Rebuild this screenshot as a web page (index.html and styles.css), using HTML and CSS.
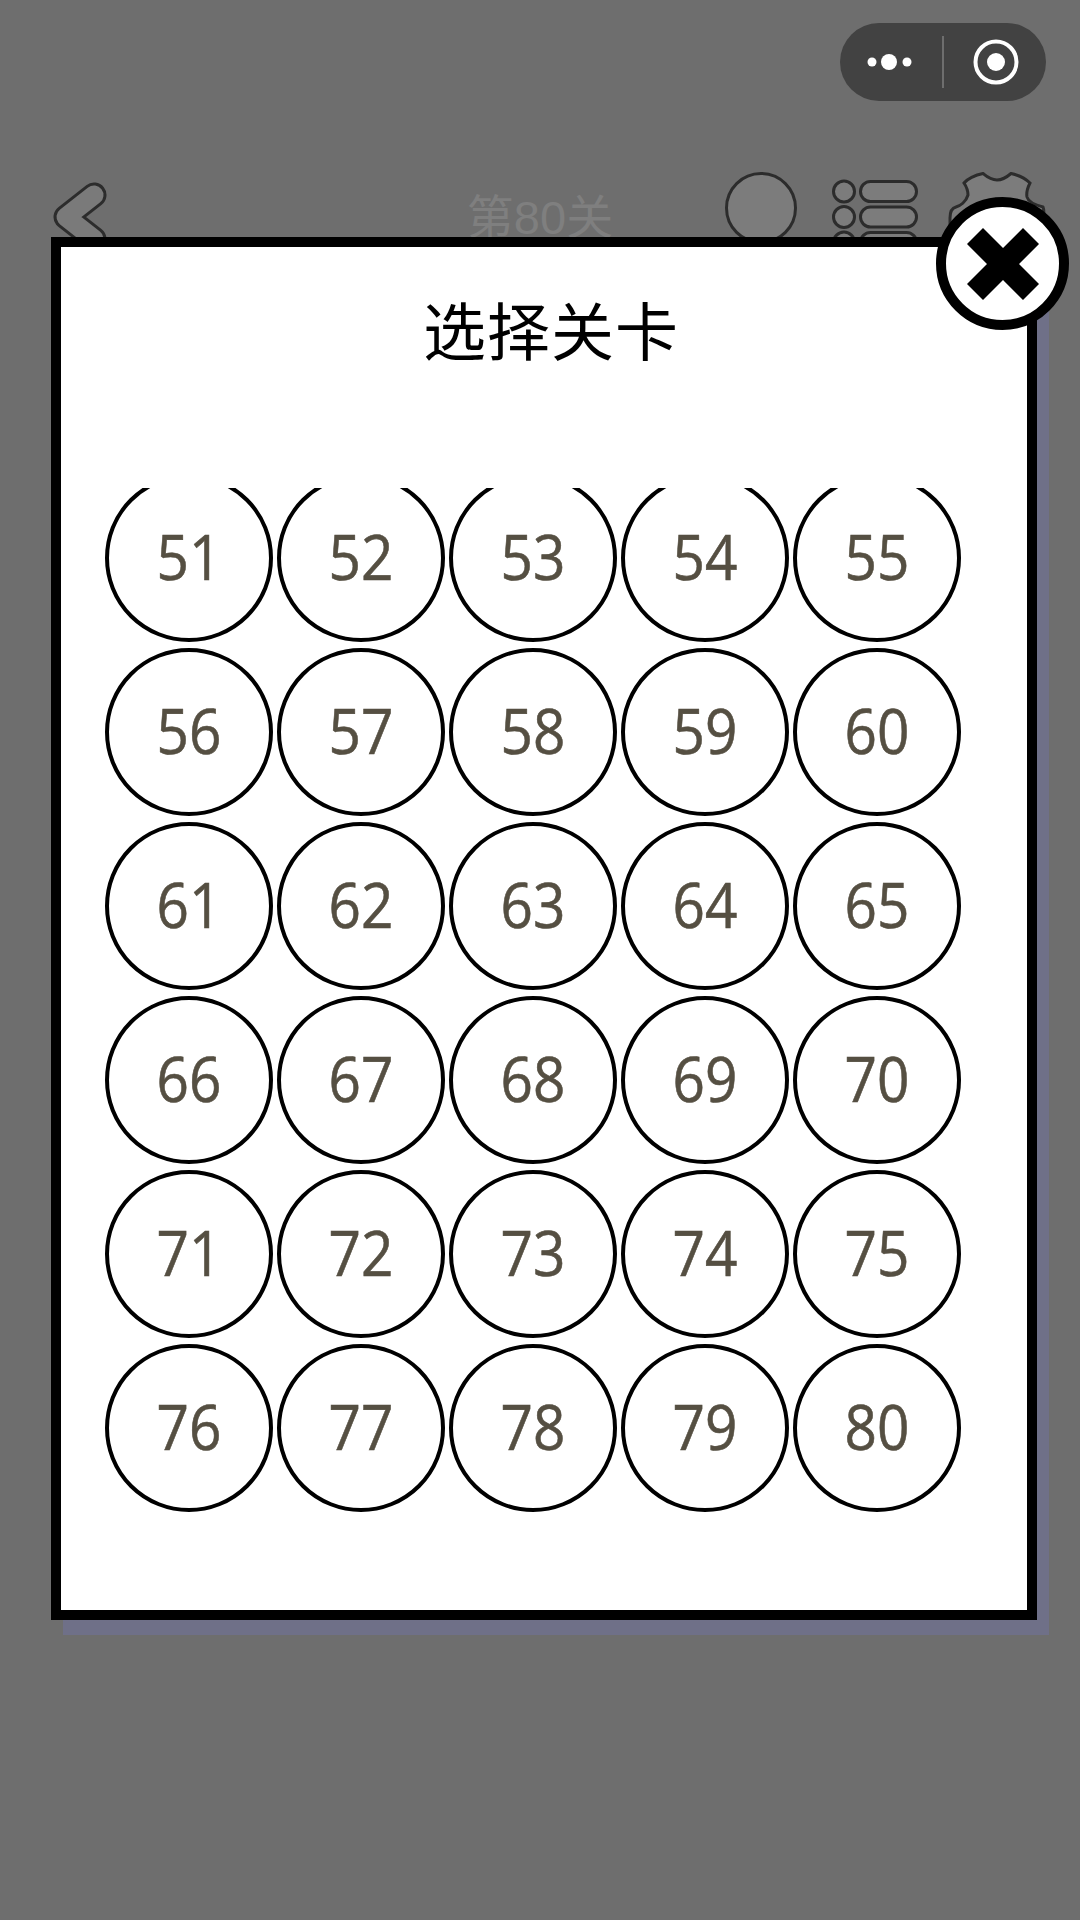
FILE: index.html
```html
<!DOCTYPE html>
<html lang="zh">
<head>
<meta charset="utf-8">
<title>选择关卡</title>
<link rel="stylesheet" href="styles.css">
</head>
<body>
<div class="screen">
  <div class="capsule">
    <svg class="cap-more" viewBox="0 0 50 20" width="50" height="20"><circle cx="7" cy="10" r="4.5"/><circle cx="24" cy="10" r="8"/><circle cx="42" cy="10" r="4.5"/></svg>
    <span class="cap-line"></span>
    <svg class="cap-ring" viewBox="0 0 46 46" width="46" height="46"><circle class="ring-o" cx="23" cy="23" r="20.5"/><circle class="ring-i" cx="23" cy="23" r="9"/></svg>
  </div>

  <header class="topbar">
    <svg class="ic-back" viewBox="0 0 60 90" width="60" height="90"><polyline class="st-out" points="42,23 14,45 42,67"/><polyline class="st-in" points="42,23 14,45 42,67"/></svg>
    <div class="level">第80关</div>
    <div class="tools">
      <span class="ic-coin"></span>
      <svg class="ic-list" viewBox="0 0 90 80" width="90" height="80">
        <g class="shape">
          <circle cx="13" cy="13.5" r="10.5"/><rect x="29.5" y="3.5" width="56" height="20" rx="10"/>
          <circle cx="13" cy="39" r="10.5"/><rect x="29.5" y="29" width="56" height="20" rx="10"/>
          <circle cx="13" cy="64.5" r="10.5"/><rect x="29.5" y="54.5" width="56" height="20" rx="10"/>
        </g>
      </svg>
      <svg class="ic-gear" viewBox="0 0 110 80" width="110" height="80">
        <path class="shape" d="M10 80 L10 46 C10 40 12 36 16 35 C20 34 26 30 28 23 C28 18 26 14 24 11 C27 7 35 3 43 1.5 C46 4 50 8 57 8 C63 8 67 5 71 1.5 C78 3 85 6 90 11 C88 15 86 20 87 25 C88 29 92 32 103 35 C104 37 104 40 104 42 L104 80 Z"/>
      </svg>
    </div>
  </header>

  <section class="modal">
    <h1 class="modal-title">选择关卡</h1>
    <div class="scroller">
      <div class="grid" id="grid"></div>
    </div>
    <button class="close" aria-label="关闭">
      <svg viewBox="0 0 72 72" width="72" height="72"><polygon points="16,0 36,20 56,0 72,16 52,36 72,56 56,72 36,52 16,72 0,56 20,36 0,16"/></svg>
    </button>
  </section>
</div>
<script src="app.js"></script>
</body>
</html>
```

FILE: styles.css
```css
* { box-sizing: border-box; }
html, body { margin: 0; padding: 0; }
body { width: 1080px; height: 1920px; background: #6e6e6e; font-family: "Liberation Sans", "Noto Sans CJK SC", sans-serif; overflow: hidden; }
.screen { position: relative; width: 1080px; height: 1920px; padding-top: 172px; }

.capsule { position: absolute; left: 840px; top: 23px; width: 206px; height: 78px; border-radius: 39px; background: #424242; display: flex; align-items: center; }
.cap-more { margin-left: 25px; fill: #fff; }
.cap-line { width: 2px; height: 52px; background: #6e6e6e; margin-left: 27px; }
.cap-ring { margin-left: 29px; }
.ring-o { fill: none; stroke: #fff; stroke-width: 4; }
.ring-i { fill: #fff; }

.topbar { display: flex; align-items: flex-start; height: 90px; padding-left: 52px; position: relative; }
.ic-back { flex: none; }
.st-out { fill: none; stroke: #2c2c2c; stroke-width: 25; stroke-linecap: round; stroke-linejoin: round; }
.st-in { fill: none; stroke: #7a7a7a; stroke-width: 19; stroke-linecap: round; stroke-linejoin: round; }
.level { position: absolute; left: 465px; top: 18px; width: 150px; text-align: center; font-size: 47px; line-height: 56px; color: #7f7f7f; white-space: nowrap; font-family: "Liberation Sans", "Noto Sans CJK SC", sans-serif; }
.tools { margin-left: auto; margin-right: 30px; display: flex; align-items: flex-start; }
.ic-coin { display: block; width: 72px; height: 72px; border-radius: 50%; background: #7c7c7c; border: 3px solid #2c2c2c; margin-right: 34px; }
.ic-list { margin-right: 19px; margin-top: 6px; flex: none; }
.ic-gear { flex: none; }
.shape, .shape * { fill: #7c7c7c; stroke: #2c2c2c; stroke-width: 3; }

.modal { position: absolute; left: 51px; top: 237px; width: 986px; height: 1383px; background: #fff; border: 10px solid #000; box-shadow: 12px 15px 0 #6f7088; display: flex; flex-direction: column; }
.modal-title { margin: 0; padding: 40px 0 0 14px; height: 241px; font-size: 63px; line-height: 82px; font-weight: 400; text-align: center; color: #000; letter-spacing: 1px; font-family: "Noto Sans CJK SC", sans-serif; }
.scroller { height: 1040px; overflow: hidden; padding-left: 44px; }
.grid { margin-top: -14px; display: grid; grid-template-columns: repeat(5, 168px); grid-auto-rows: 168px; column-gap: 4px; row-gap: 6px; }
.cell { border: 4px solid #000; border-radius: 50%; display: flex; align-items: center; justify-content: center; background: #fff; }
.num { display: block; font-family: "Open Sans", "Liberation Sans", sans-serif; font-size: 63px; line-height: 1; padding-bottom: 6px; color: #554f42; -webkit-text-stroke: 0.6px #554f42; transform: scaleX(.9); }

.close { position: absolute; right: -42px; top: -50px; width: 133px; height: 133px; border-radius: 50%; background: #fff; border: 10px solid #000; padding: 0; display: flex; align-items: center; justify-content: center; }
.close svg { fill: #000; display: block; }
```

FILE: app.js
```js
var grid = document.getElementById('grid');
for (var n = 51; n <= 80; n++) {
  var cell = document.createElement('div');
  cell.className = 'cell';
  var num = document.createElement('span');
  num.className = 'num';
  num.textContent = n;
  cell.appendChild(num);
  grid.appendChild(cell);
}
```
